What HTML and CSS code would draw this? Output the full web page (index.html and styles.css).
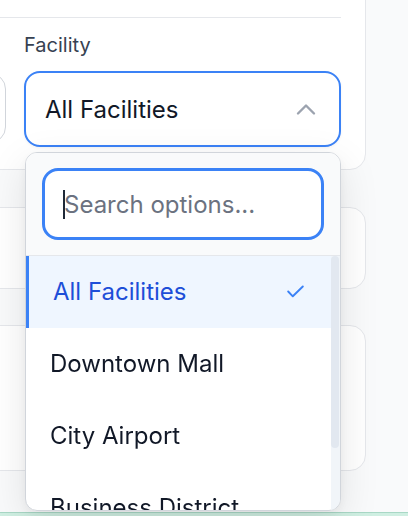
FILE: index.html
```html
<!DOCTYPE html>
<html lang="en">
<head>
<meta charset="utf-8">
<title>Facility filter</title>
<link rel="stylesheet" href="styles.css">
</head>
<body>
<div class="page">
  <section class="card card-filters">
    <div class="card-head"></div>
    <div class="filters">
      <div class="field field-other">
        <div class="select select-plain"></div>
      </div>
      <div class="field">
        <label class="label">Facility</label>
        <div class="select-wrap">
          <div class="select select-open">
            <span class="select-value">All Facilities</span>
            <svg class="chevron" width="20" height="13" viewBox="0 0 20 13" aria-hidden="true"><path d="M2 10.5 L10 2.5 L18 10.5" fill="none" stroke="#9ca3af" stroke-width="2.4" stroke-linecap="round" stroke-linejoin="round"/></svg>
          </div>
          <div class="dropdown">
            <div class="search">
              <div class="search-input"><span class="caret"></span><span class="placeholder">Search options...</span></div>
            </div>
            <div class="list-wrap">
              <ul class="options">
                <li class="option selected"><span>All Facilities</span><svg class="check" width="17" height="13" viewBox="0 0 17 13" aria-hidden="true"><path d="M1.2 6.5 L5.8 11.3 L15.8 1.5" fill="none" stroke="#3b82f6" stroke-width="1.9" stroke-linecap="round" stroke-linejoin="round"/></svg></li>
                <li class="option">Downtown Mall</li>
                <li class="option">City Airport</li>
                <li class="option">Business District</li>
                <li class="option">Harbor Point</li>
              </ul>
              <div class="scroll-track"><div class="scroll-thumb"></div></div>
            </div>
          </div>
        </div>
      </div>
    </div>
  </section>
  <section class="card card-b"></section>
  <section class="card card-c"></section>
</div>
<div class="bottom-strip"></div>
</body>
</html>
```
FILE: styles.css
```css
* { box-sizing: border-box; }
html, body {
  margin: 0;
  padding: 0;
  height: 100%;
  overflow: hidden;
}
body {
  background: #f9fafb;
  font-family: Inter, "Noto Sans", "Liberation Sans", sans-serif;
  color: #111827;
}
.page {
  margin-left: -336px;
  width: 702px;
}
.card {
  background: #ffffff;
  border: 1px solid #e5e7eb;
  border-radius: 16px;
  padding: 0 24px;
}
.card-filters {
  margin-top: -30px;
  position: relative;
  z-index: 2;
}
.card-head {
  height: 47px;
  border-bottom: 1px solid #e5e7eb;
}
.filters {
  display: grid;
  grid-template-columns: 317px 317px;
  column-gap: 18px;
  padding: 15px 0 22px;
}
.field { display: flex; flex-direction: column; }
.field-other { padding-top: 39px; }
.label {
  display: block;
  font-size: 20px;
  line-height: 24px;
  color: #374151;
  margin-bottom: 14px;
}
.select-wrap { position: relative; }
.select {
  height: 76px;
  border-radius: 16px;
  background: #ffffff;
}
.select-plain {
  height: 70px;
  margin-top: 1px;
  border: 1px solid #d1d5db;
}
.select-open {
  border: 2px solid #3b82f6;
  display: flex;
  align-items: center;
  justify-content: space-between;
  padding: 0 23px 0 19px;
  font-size: 24px;
  color: #111827;
  box-shadow: 0 1px 3px rgba(0, 0, 0, 0.05);
}
.chevron { display: block; }
.dropdown {
  position: absolute;
  top: calc(100% + 5px);
  left: 1px;
  right: 0;
  height: 359px;
  background: #ffffff;
  border: 1px solid #d1d5db;
  border-radius: 12px;
  overflow: hidden;
  display: flex;
  flex-direction: column;
  box-shadow: 0 12px 40px rgba(0, 0, 0, 0.10), 0 4px 12px rgba(0, 0, 0, 0.05);
}
.search {
  padding: 15px 16px;
  background: #f9fafb;
  border-bottom: 1px solid #e5e7eb;
}
.search-input {
  height: 72px;
  border: 3px solid #3b82f6;
  border-radius: 16px;
  background: #ffffff;
  padding-left: 18px;
  display: flex;
  align-items: center;
  font-size: 24px;
}
.caret {
  display: inline-block;
  width: 2px;
  height: 29px;
  background: #1f2937;
  margin-right: -1px;
}
.placeholder { color: #6b7280; }
.list-wrap {
  flex: 1;
  display: flex;
  overflow: hidden;
}
.options {
  flex: 1;
  list-style: none;
  margin: 0;
  padding: 0;
}
.option {
  height: 72px;
  display: flex;
  align-items: center;
  padding-left: 24px;
  padding-bottom: 2px;
  font-size: 24px;
  color: #111827;
}
.option.selected {
  background: #eff6ff;
  border-left: 3px solid #3b82f6;
  color: #1d4ed8;
  justify-content: space-between;
  padding-right: 27px;
}
.check { display: block; }
.scroll-track {
  width: 9px;
  background: #f1f5f9;
}
.scroll-thumb {
  width: 8px;
  height: 192px;
  background: #e2e8f0;
  border-radius: 4px;
}
.card-b {
  margin-top: 37px;
  height: 82px;
}
.card-c {
  margin-top: 36px;
  height: 146px;
}
.bottom-strip {
  position: fixed;
  left: 0;
  right: 0;
  bottom: 0;
  height: 4px;
  background: #cfefe2;
  border-top: 1px solid #a9d8c6;
}
```
